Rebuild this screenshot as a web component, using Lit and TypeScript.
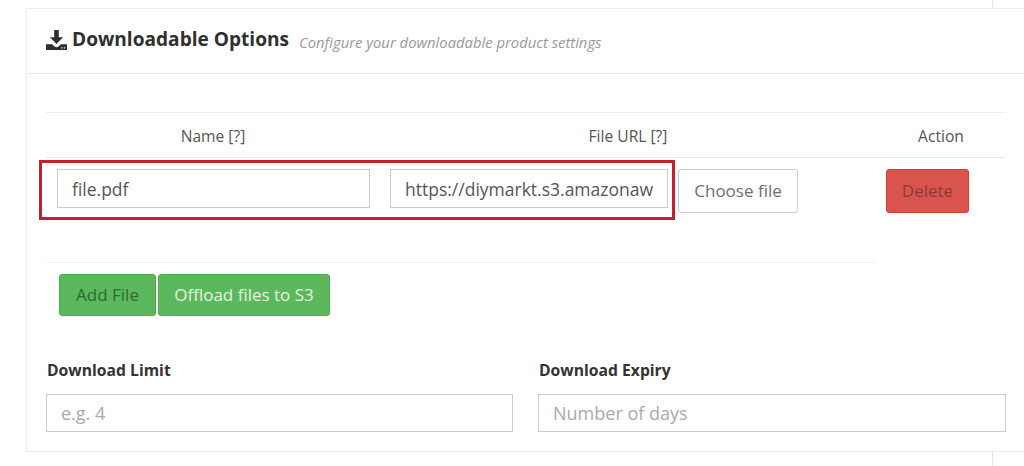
import { LitElement, html, css } from "lit";
import { customElement } from "lit/decorators.js";

@customElement("app-root")
export class AppRoot extends LitElement {
  static styles = css`
    :host {
      display: block;
      position: relative;
      width: 1024px;
      height: 466px;
      overflow: hidden;
      background: #fff;
      font-family: "Open Sans", sans-serif;
      color: #555;
    }
    .rail {
      position: absolute;
      left: 992px;
      top: 0;
      bottom: 0;
      width: 1px;
      background: #e6e6e6;
    }
    .panel {
      position: relative;
      box-sizing: border-box;
      margin: 8px 0 0 26px;
      width: 1040px;
      height: 444px;
      background: #fff;
      border: 1px solid #eeeeee;
    }
    .head {
      box-sizing: border-box;
      height: 65px;
      border-bottom: 1px solid #e8e8e8;
      padding: 19px 0 0 19px;
      display: flex;
      align-items: flex-start;
      gap: 10px;
    }
    h2 {
      margin: 0;
      display: flex;
      align-items: center;
      gap: 5px;
      font-size: 19.1px;
      line-height: 20px;
      font-weight: 700;
      color: #2f2f2f;
    }
    h2 svg { display: block; width: 21px; height: 20px; margin-top: 2px; }
    .sub {
      font-size: 14.8px;
      line-height: 18px;
      font-style: italic;
      color: #999;
      margin-top: 5px;
    }
    .body { padding: 38px 0 0 19px; width: 960px; }
    .thead {
      display: grid;
      grid-template-columns: 334px 496px 130px;
      height: 46px;
      box-sizing: border-box;
      border-top: 1px solid #eee;
      border-bottom: 1px solid #e8e8e8;
      font-size: 15.6px;
      line-height: 47px;
      text-align: center;
      color: #555;
    }
    .row {
      display: grid;
      grid-template-columns: 334px 496px 130px;
      height: 104px;
      box-sizing: border-box;
      padding-top: 11px;
    }
    .cell { display: flex; gap: 10px; padding-left: 10px; align-items: flex-start; }
    .cell.first { padding-left: 11px; }
    input {
      box-sizing: border-box;
      display: block;
      border: 1px solid #ccc;
      background: #fff;
      font-family: inherit;
      font-size: 18px;
      color: #555;
      padding: 0 14px;
      margin: 0;
      outline: none;
      border-radius: 0;
    }
    input::placeholder { color: #aaa; opacity: 1; }
    .name { width: 313px; height: 39px; font-size: 17.5px; }
    .url { width: 278px; height: 39px; font-size: 17.5px; }
    button {
      box-sizing: border-box;
      font-family: inherit;
      font-size: 17px;
      border-radius: 3px;
      margin: 0;
      padding: 0 0 2px;
      cursor: pointer;
    }
    .choose {
      width: 120px;
      height: 44px;
      background: #fff;
      border: 1px solid #ccc;
      color: #6f6f6f;
    }
    .delete {
      width: 83px;
      height: 44px;
      background: #d9534f;
      border: 1px solid #d43f3a;
      color: #8e3a37;
    }
    .foot {
      width: 829px;
      height: 120px;
      box-sizing: border-box;
      margin-left: 1px;
      border-top: 1px solid #eee;
      padding: 11px 0 0 12px;
      display: flex;
      gap: 2px;
      align-items: flex-start;
    }
    .green {
      height: 42px;
      background: #5cb85c;
      border: 1px solid #4cae4c;
    }
    .add { width: 97px; color: #2f6b2f; }
    .offload { width: 172px; color: #e3f3e3; }
    .fields {
      display: grid;
      grid-template-columns: 467px 468px;
      column-gap: 25px;
      margin-top: -22px;
    }
    label {
      display: block;
      font-size: 15.7px;
      line-height: 20px;
      font-weight: 700;
      color: #333;
      padding-left: 1px;
      margin-bottom: 14px;
    }
    .fields input { width: 100%; height: 38px; }
    .mark {
      position: absolute;
      left: 12px;
      top: 151px;
      width: 636px;
      height: 60px;
      box-sizing: border-box;
      border: 3px solid #c1202f;
      pointer-events: none;
    }
  `;

  render() {
    return html`
      <div class="rail"></div>
      <section class="panel">
        <header class="head">
          <h2>
            <svg viewBox="0 0 21 20" aria-hidden="true">
              <path fill="#2f2f2f" d="M8.2 0h4.6v7.2H17L10.5 14 4 7.2h4.2z" />
              <path
                fill="#2f2f2f"
                fill-rule="evenodd"
                d="M0 14.2h6l2.6 2.4c1.1 1 2.7 1 3.8 0l2.6-2.4h6V20H0zM15.2 17.2v1.2h1.3v-1.2zM17.8 17.2v1.2h1.3v-1.2z"
              />
            </svg>
            Downloadable Options
          </h2>
          <span class="sub">Configure your downloadable product settings</span>
        </header>
        <div class="body">
          <div class="thead">
            <div>Name [?]</div>
            <div>File URL [?]</div>
            <div>Action</div>
          </div>
          <div class="row">
            <div class="cell first"><input class="name" .value=${"file.pdf"} /></div>
            <div class="cell">
              <input class="url" .value=${"https://diymarkt.s3.amazonaws.com/file.pdf"} />
              <button class="choose">Choose file</button>
            </div>
            <div class="cell"><button class="delete">Delete</button></div>
          </div>
          <div class="foot">
            <button class="green add">Add File</button>
            <button class="green offload">Offload files to S3</button>
          </div>
          <div class="fields">
            <div>
              <label>Download Limit</label>
              <input placeholder="e.g. 4" />
            </div>
            <div>
              <label>Download Expiry</label>
              <input placeholder="Number of days" />
            </div>
          </div>
        </div>
        <div class="mark"></div>
      </section>
    `;
  }
}
